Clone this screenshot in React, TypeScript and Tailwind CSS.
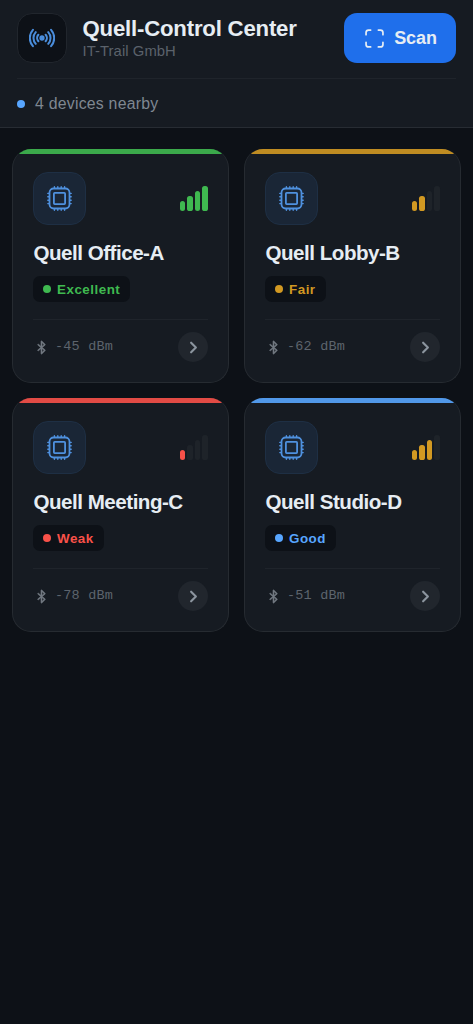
import React from 'react';
import { IoBluetooth, IoChevronForward, IoRadioOutline, IoScan } from 'react-icons/io5';

interface Device {
  name: string;
  quality: string;
  rssi: number;
  bars: number;
  accent: string;
  text: string;
  barColor: string;
}

const devices: Device[] = [
  { name: 'Quell Office-A', quality: 'Excellent', rssi: -45, bars: 4, accent: 'bg-[#3fb950]', text: 'text-[#3fb950]', barColor: 'bg-[#3fb950]' },
  { name: 'Quell Lobby-B', quality: 'Fair', rssi: -62, bars: 2, accent: 'bg-[#d29922]', text: 'text-[#d29922]', barColor: 'bg-[#d29922]' },
  { name: 'Quell Meeting-C', quality: 'Weak', rssi: -78, bars: 1, accent: 'bg-[#f85149]', text: 'text-[#f85149]', barColor: 'bg-[#f85149]' },
  { name: 'Quell Studio-D', quality: 'Good', rssi: -51, bars: 3, accent: 'bg-[#58a6ff]', text: 'text-[#58a6ff]', barColor: 'bg-[#d29922]' },
];

const barHeights = ['h-[10px]', 'h-[15px]', 'h-[20px]', 'h-[25px]'];

function ChipIcon() {
  return (
    <svg width="25" height="25" viewBox="0 0 25 25" fill="none" stroke="currentColor" strokeLinecap="round" className="text-[#4f91df]">
      <rect x="2.5" y="2.5" width="20" height="20" rx="4.2" strokeWidth="1.8" />
      <rect x="6.9" y="6.9" width="11.2" height="11.2" rx="0.8" strokeWidth="1.8" />
      <path
        strokeWidth="1.4"
        d="M7.4 .8v1.4M10.8 .8v1.4M14.2 .8v1.4M17.6 .8v1.4M7.4 22.8v1.4M10.8 22.8v1.4M14.2 22.8v1.4M17.6 22.8v1.4M.8 7.4h1.4M.8 10.8h1.4M.8 14.2h1.4M.8 17.6h1.4M22.8 7.4h1.4M22.8 10.8h1.4M22.8 14.2h1.4M22.8 17.6h1.4"
      />
    </svg>
  );
}

function SignalBars({ device }: { device: Device }) {
  return (
    <div className="flex h-[25px] items-end gap-[2px]">
      {barHeights.map((height, idx) => (
        <span
          key={height}
          className={`w-[5.6px] rounded-[2.6px] ${height} ${idx < device.bars ? device.barColor : 'bg-[#1e2329]'}`}
        />
      ))}
    </div>
  );
}

function DeviceCard({ device }: { device: Device }) {
  return (
    <div className="flex h-[234px] flex-col overflow-hidden rounded-[19px] border border-t-0 border-[#262b31] bg-[#161b22]">
      <div className={`h-[5px] shrink-0 opacity-90 ${device.accent}`} />
      <div className="flex flex-1 flex-col px-5 pt-[18px]">
        <div className="flex h-[53px] items-center justify-between">
          <div className="flex size-[53px] items-center justify-center rounded-[15px] border border-[#1e2f44] bg-[#1a2636]">
            <ChipIcon />
          </div>
          <SignalBars device={device} />
        </div>
        <h2 className="mt-[15px] pl-[0.5px] text-[20.6px] leading-[25px] font-bold tracking-[-0.5px] whitespace-nowrap text-[#e6edf3]">
          {device.name}
        </h2>
        <div className="mt-[11px] flex h-[26px] items-center gap-[6px] self-start rounded-[7px] bg-[#0d1117] px-[10px]">
          <span className={`size-2 rounded-full ${device.accent}`} />
          <span className={`pt-px text-[13.4px] leading-4 font-bold tracking-[0.5px] ${device.text}`}>{device.quality}</span>
        </div>
        <div className="mt-[17px] flex items-center justify-between border-t border-[#1f242b] pt-3">
          <div className="flex items-center gap-[6px] pl-px text-[#737a83]">
            <IoBluetooth size={15} className="[&_*]:[stroke-width:14px]" />
            <span className="font-['Liberation_Mono',monospace] text-[13.5px] leading-4 tracking-[0.2px] text-[#5d646d]">
              {device.rssi} dBm
            </span>
          </div>
          <div className="flex size-[30px] items-center justify-center rounded-full bg-[#21262d] text-[#8b949e]">
            <IoChevronForward size={17} className="[&_*]:[stroke-width:64px]" />
          </div>
        </div>
      </div>
    </div>
  );
}

export default function App() {
  return (
    <div className="min-h-screen bg-[#0d1117] font-['Liberation_Sans',sans-serif]">
      <header className="h-[128px] border-b border-[#272c33] bg-[#161b22] px-[17px] pt-[13px]">
        <div className="flex h-[50px] items-center">
          <div className="flex size-[50px] items-center justify-center rounded-[15px] border border-[#21262d] bg-[#0d1117]">
            <IoRadioOutline size={26} className="text-[#4a8ddb] [&_*]:[stroke-width:40px]" />
          </div>
          <div className="ml-[15.5px] flex-1">
            <h1 className="-mt-px text-[22.2px] leading-[25px] font-bold tracking-[-0.2px] whitespace-nowrap text-[#e6edf3]">
              Quell-Control Center
            </h1>
            <p className="-mb-px pt-px text-[14.8px] leading-[18px] tracking-[0.08px] text-[#5b626b]">IT-Trail GmbH</p>
          </div>
          <button className="flex h-[50px] w-[112px] items-center justify-center gap-2 rounded-[13px] bg-[#1f6feb] text-[#e6edf3]">
            <IoScan size={23} className="[&_*]:[stroke-width:38px]" />
            <span className="text-[18px] leading-5 font-bold tracking-[-0.1px]">Scan</span>
          </button>
        </div>
        <div className="mt-[15px] flex items-center gap-[10px] border-t border-[#1f242b] pt-[15px]">
          <span className="size-2 rounded-full bg-[#58a6ff]" />
          <span className="text-[15.8px] leading-5 tracking-[0.25px] text-[#7f8791]">4 devices nearby</span>
        </div>
      </header>
      <main className="grid grid-cols-2 gap-x-[15px] gap-y-[15px] px-3 pt-[21px]">
        {devices.map((device) => (
          <DeviceCard key={device.name} device={device} />
        ))}
      </main>
    </div>
  );
}
